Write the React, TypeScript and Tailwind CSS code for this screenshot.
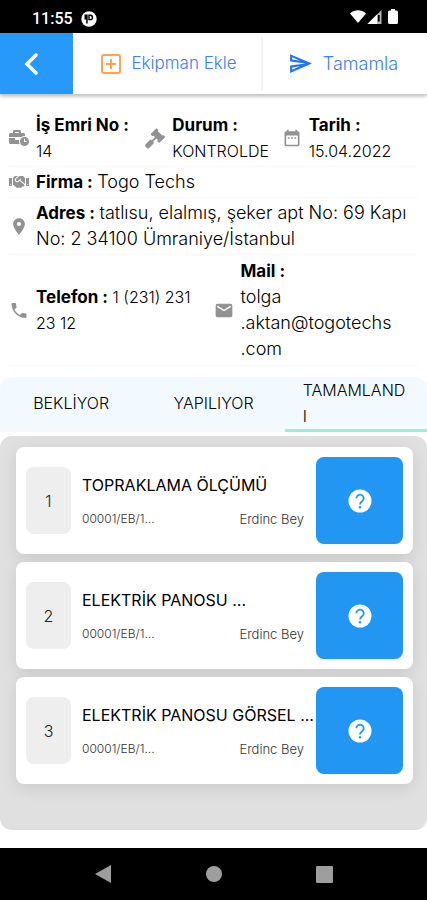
import { useState } from 'react';
import type { ReactNode } from 'react';
import { FaBusinessTime, FaGavel, FaHandshake } from 'react-icons/fa';
import { MdDateRange, MdEmail, MdLocationOn, MdOutlineSend, MdPhone } from 'react-icons/md';

const tabs = ['BEKLİYOR', 'YAPILIYOR', 'TAMAMLANDI'];

const jobs = [
    { id: 1, title: 'TOPRAKLAMA ÖLÇÜMÜ', code: '00001/EB/1...', owner: 'Erdinc Bey' },
    { id: 2, title: 'ELEKTRİK PANOSU ...', code: '00001/EB/1...', owner: 'Erdinc Bey' },
    { id: 3, title: 'ELEKTRİK PANOSU GÖRSEL ...', code: '00001/EB/1...', owner: 'Erdinc Bey' },
];

function StatusBar() {
    return (
        <div className="flex h-[33px] items-center justify-between bg-black pr-7 pl-8 text-white">
            <div className="flex items-center gap-2 pt-1">
                <span className="font-[Roboto] text-base leading-5 font-medium">11:55</span>
                <svg viewBox="0 0 16 16" className="size-4">
                    <circle cx="8" cy="8" r="7.7" fill="#fff" />
                    <path d="M3.500 3.500h3.200v9H5.200V8.500H3.500z" fill="#000" />
                    <path d="M8 4.200h1.300a2.200 2.200 0 0 1 0 4.400H8z" fill="none" stroke="#000" strokeWidth="1.400" />
                </svg>
            </div>
            <svg viewBox="0 0 50 16" className="h-4 w-[50px]">
                <path d="M1 4.500C5.500.200 12.500.200 17 4.500L9 14z" fill="#fff" />
                <path d="M18.500 15 32.500 1v14z" fill="#b5b5b5" />
                <path d="M18.500 15 28 5.500V15z" fill="#fff" />
                <path d="M29.800 6v6.500" stroke="#000" strokeWidth="1.800" />
                <path d="M42 0h4v1.500h1.500q1.500 0 1.500 1.500v10.500q0 1.500-1.500 1.500h-7Q39 15 39 13.500V3q0-1.500 1.500-1.500H42z" fill="#fff" />
            </svg>
        </div>
    );
}

function InfoItem({ icon, label, children }: { icon: ReactNode; label: string; children: ReactNode }) {
    return (
        <div className="flex items-center gap-[7px]">
            <span className="flex w-5 shrink-0 justify-center text-[#929292]">{icon}</span>
            <p className="min-w-0 flex-1 font-light">
                <strong className="text-[17px] font-bold">{label} :</strong> {children}
            </p>
        </div>
    );
}

function HelpIcon() {
    return (
        <svg viewBox="0 0 24 24" className="size-6">
            <circle cx="12" cy="12" r="11.500" fill="#fff" />
            <path
                d="M8.300 9.300a3.700 3.700 0 1 1 5.900 3Q12 13.800 12 15.500"
                fill="none"
                stroke="#2196f3"
                strokeWidth="1.800"
            />
            <circle cx="12" cy="18.300" r="1.200" fill="#2196f3" />
        </svg>
    );
}

function JobCard({ job }: { job: (typeof jobs)[number] }) {
    return (
        <li className="flex items-center rounded-lg bg-white p-[10px] shadow-[0_4px_16px_rgba(0,0,0,0.1)]">
            <span className="flex h-[67px] w-[45px] shrink-0 items-center justify-center rounded-lg bg-[#eeeeee] text-base font-light text-[#222222]">
                {job.id}
            </span>
            <div className="ml-[11px] min-w-0 flex-1">
                <h2 className="text-base leading-6 whitespace-nowrap text-black">{job.title}</h2>
                <div className="mt-3 flex justify-between pr-3 leading-5 font-light text-[#333333]">
                    <span className="text-xs leading-5">{job.code}</span>
                    <span className="text-[13px]">{job.owner}</span>
                </div>
            </div>
            <button
                type="button"
                aria-label="Detay"
                className="flex size-[87px] shrink-0 items-center justify-center rounded-lg bg-[#2196f3]"
            >
                <HelpIcon />
            </button>
        </li>
    );
}

export default function App() {
    const [activeTab, setActiveTab] = useState('TAMAMLANDI');

    return (
        <div className="flex min-h-screen flex-col bg-white font-['Inter','Noto_Sans',sans-serif] text-black">
            <StatusBar />

            <header className="relative flex h-[61px] bg-white shadow-[0_2px_4px_rgba(0,0,0,0.3)]">
                <button type="button" aria-label="Geri" className="flex w-[73px] items-center justify-center bg-[#2699fb] pr-3">
                    <svg viewBox="0 0 14 22" className="h-[22px] w-[14px]" fill="none" stroke="#fff" strokeWidth="3.500">
                        <path d="M12 2 3 11l9 9" strokeLinecap="round" />
                    </svg>
                </button>
                <button type="button" className="my-1 flex flex-1 items-center justify-center gap-[10px] border-r-2 border-[#f1f3f5] pl-1 text-[#3d7bff]">
                    <svg viewBox="0 0 20 20" className="size-5" fill="none" stroke="#ffa34d" strokeWidth="2">
                        <rect x="1" y="1" width="18" height="18" rx="2" />
                        <path d="M10 5v10M5 10h10" />
                    </svg>
                    <span className="text-[17px] font-light">Ekipman Ekle</span>
                </button>
                <button type="button" className="flex w-[164px] items-center justify-center gap-[10px] pr-1 text-[#3d7bff]">
                    <MdOutlineSend size={25} color="#1f75f5" />
                    <span className="text-lg font-light">Tamamla</span>
                </button>
            </header>

            <section className="px-[9px] pt-[18px] text-base leading-[26px]">
                <div className="grid grid-cols-3 border-b border-[#f8f8f8] pb-[2px]">
                    <InfoItem icon={<FaBusinessTime size={20} />} label="İş Emri No">
                        <span className="block">14</span>
                    </InfoItem>
                    <InfoItem icon={<FaGavel size={21} />} label="Durum">
                        <span className="block">KONTROLDE</span>
                    </InfoItem>
                    <InfoItem icon={<MdDateRange size={20} />} label="Tarih">
                        <span className="block">15.04.2022</span>
                    </InfoItem>
                </div>
                <div className="border-b border-[#f8f8f8] py-[2px]">
                    <InfoItem icon={<FaHandshake size={20} />} label="Firma">
                        <span className="text-lg leading-[26px]">Togo Techs</span>
                    </InfoItem>
                </div>
                <div className="border-b border-[#f8f8f8] py-[2px]">
                    <InfoItem icon={<MdLocationOn size={21} />} label="Adres">
                        <span className="text-lg leading-[26px]">
                            tatlısu, elalmış, şeker apt No: 69 Kapı No: 2 34100 Ümraniye/İstanbul
                        </span>
                    </InfoItem>
                </div>
                <div className="grid grid-cols-2 border-b border-[#f8f8f8] py-[3px]">
                    <div className="flex items-center pr-3">
                        <InfoItem icon={<MdPhone size={21} />} label="Telefon">
                            1 (231) 231 23 12
                        </InfoItem>
                    </div>
                    <InfoItem icon={<MdEmail size={21} />} label="Mail">
                        <span className="block text-lg leading-[26px]">
                            tolga
                            <br />
                            .aktan@togotechs
                            <br />
                            .com
                        </span>
                    </InfoItem>
                </div>
            </section>

            <nav className="mt-[11px] grid grid-cols-3 rounded-t-xl bg-[#f2f9ff]">
                {tabs.map((tab) => (
                    <button
                        key={tab}
                        type="button"
                        onClick={() => setActiveTab(tab)}
                        className={`flex min-h-[54px] items-center justify-center border-b-[3px] px-[18px] text-base leading-[26px] font-light text-black ${
                            activeTab === tab ? 'border-[#8df2d9]' : 'border-transparent'
                        }`}
                    >
                        <span className="text-left break-all">{tab}</span>
                    </button>
                ))}
            </nav>

            <main className="mt-1 mb-[18px] flex-1 rounded-xl bg-[#e0e0e0] pt-[11px] pr-[14px] pb-4 pl-4">
                <ul className="flex flex-col gap-2">
                    {jobs.map((job) => (
                        <JobCard key={job.id} job={job} />
                    ))}
                </ul>
            </main>

            <footer className="flex h-[52px] items-center justify-evenly bg-black text-[#9e9e9e]">
                <button type="button" aria-label="Sistem geri">
                    <svg viewBox="0 0 18 18" className="size-[18px]" fill="currentColor">
                        <path d="M17 0v18L1 9z" />
                    </svg>
                </button>
                <button type="button" aria-label="Ana ekran" className="size-4 rounded-full bg-[#9e9e9e]" />
                <button type="button" aria-label="Son uygulamalar" className="size-[17px] rounded-[1px] bg-[#9e9e9e]" />
            </footer>
        </div>
    );
}
